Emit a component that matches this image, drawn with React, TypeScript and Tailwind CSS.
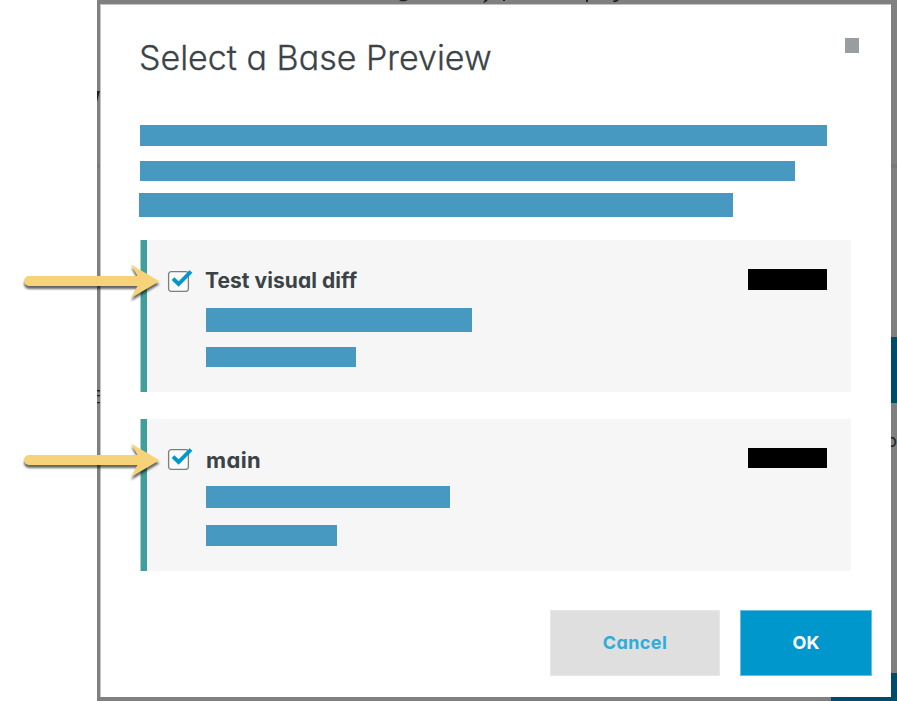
import React from "react";

const FONT = "font-['Inter','Liberation_Sans',sans-serif] [font-feature-settings:'cv11'_1]";

function Check() {
  return (
    <svg width="26" height="24" viewBox="0 0 26 24" fill="none" className="block shrink-0">
      <rect x="1.6" y="3.6" width="19.8" height="19.8" rx="2.6" fill="#fafafa" stroke="#788080" strokeWidth="1.3" />
      <path d="M6 10.6 L11.6 16 L24 3.5" stroke="#0098cc" strokeWidth="3.9" />
    </svg>
  );
}

function Arrow() {
  return (
    <svg width="150" height="52" viewBox="0 0 150 52" className="block overflow-visible">
      <path
        d="M9 16 H117.5 L111 4.5 L139.5 21.3 L111 38 L117.5 26 H9 A5 5 0 0 1 9 16 Z"
        fill="#f6d278"
        className="[filter:drop-shadow(0px_3px_1px_rgba(0,0,0,0.6))]"
      />
    </svg>
  );
}

type CardProps = {
  title: string;
  titleClass: string;
  checkClass: string;
  first: string;
  second: string;
  tag: string;
};

function PreviewCard({ title, titleClass, checkClass, first, second, tag }: CardProps) {
  return (
    <div className="flex h-[152px] w-[711px] border-l border-[#a5d0cd] bg-[#f6f6f6]">
      <div className="w-[6px] shrink-0 bg-[#409f9b]" />
      <div className={"ml-5 w-[39px] shrink-0 " + checkClass}>
        <Check />
      </div>
      <div className="flex flex-1 flex-col">
        <div className="flex h-[67px] items-start">
          <div className={"mt-[25px] whitespace-nowrap font-bold leading-8 " + titleClass}>{title}</div>
        </div>
        <div className={first} />
        <div className={second} />
      </div>
      <div className={"mr-6 w-[79px] bg-black " + tag} />
    </div>
  );
}

export default function App() {
  return (
    <div className={"relative flex h-[701px] w-[897px] overflow-hidden bg-white pl-[97px] text-[#3b4347] " + FONT}>
      <div className="relative w-[800px] overflow-hidden bg-[#808080] pl-[3px] pt-1">
        {/* Dimmed page behind the dialog */}
        <div className="absolute left-0 top-[164px] h-1 w-full bg-[#787878]" />
        <div className="absolute right-0 top-[337px] h-[66px] w-10 bg-[#004c68]" />
        <div className="absolute bottom-0 right-0 h-7 w-[66px] bg-[#004c68]" />
        <div className="absolute right-0 top-[427px] text-[18px] leading-7 text-[#202325]">o</div>
        <svg className="absolute left-0 top-0" width="800" height="410" fill="#202020">
          <path d="M0 91 H3 L0 102 Z" />
          <path d="M302 0 H311 L308 1.2 H304 Z M388 0 H391 L388 2.5 H386 Z M406 0 H408 V1 H406 Z M489 0 H491 V2 H489 Z M519 0 H522 L519 2 H516 V0.8 Z" />
          <path d="M0 390 H4 V391.5 H0 Z M0 395 H4 V396.3 H0 Z M0 402 H4 V403.3 H0 Z" />
        </svg>
        <main className="relative flex h-[693px] w-[791px] flex-col border-l border-t border-[#c3c3c3] bg-white pl-[39px]">
          <div className="flex h-[120px] justify-between">
            <h1 className="-ml-px mt-[31px] whitespace-nowrap text-[34px] font-light leading-[44px] tracking-[0px] [-webkit-text-stroke:0.3px_#3b4347]">
              Select a Base Preview
            </h1>
            <div className="mr-8 mt-[33px] h-[15px] w-[14px] bg-[#989da0]" />
          </div>
          <div className="h-[115px] shrink-0">
            <div className="h-[21px] w-[687px] bg-[#4799c2]" />
            <div className="mt-[15px] h-5 w-[655px] bg-[#4799c2]" />
            <div className="-ml-px mt-3 h-6 w-[594px] bg-[#4799c2]" />
          </div>
          <div className="flex flex-col gap-[27px]">
            <PreviewCard
              title="Test visual diff"
              titleClass="-ml-px text-[21px] tracking-[0.06px]"
              checkClass="mt-[28px]"
              first="mt-px h-6 w-[266px] bg-[#4799c2]"
              second="mt-[15px] h-5 w-[150px] bg-[#4799c2]"
              tag="mt-[29px] h-[21px]"
            />
            <PreviewCard
              title="main"
              titleClass="text-[22px] tracking-[0.4px]"
              checkClass="mt-[27px]"
              first="h-[22px] w-[244px] bg-[#4799c2]"
              second="mt-[17px] h-[21px] w-[131px] bg-[#4799c2]"
              tag="mt-[29px] h-5"
            />
          </div>
          <div className="mr-[19px] mt-[39px] flex justify-end gap-5 text-[18px] font-bold">
            <button className="h-[66px] w-[170px] border border-[#e8e8e8] bg-[#dfdfdf] pb-px text-[#2eadd8]">
              <span className="inline-block tracking-[0.4px]">Cancel</span>
            </button>
            <button className="h-[66px] w-[132px] border border-[#65bfdf] bg-[#0098cc] pb-px text-white">OK</button>
          </div>
        </main>
      </div>
      <div className="absolute left-5 top-[260px]"><Arrow /></div>
      <div className="absolute left-5 top-[439px]"><Arrow /></div>
    </div>
  );
}
